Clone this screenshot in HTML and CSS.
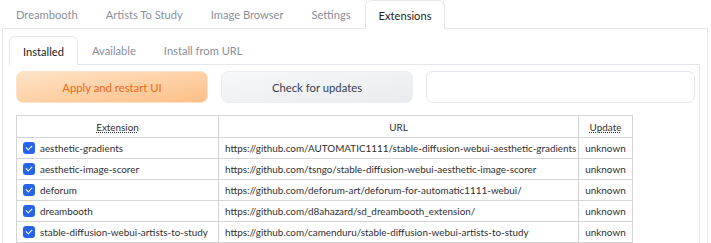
FILE: index.html
```html
<!DOCTYPE html>
<html lang="en">
<head>
    <meta charset="UTF-8">
    <title>Extensions</title>
    <link rel="stylesheet" href="styles.css">
</head>
<body>
    <div class="tabs">
        <div class="tab-nav">
            <button class="tab-btn">Dreambooth</button>
            <button class="tab-btn">Artists To Study</button>
            <button class="tab-btn">Image Browser</button>
            <button class="tab-btn">Settings</button>
            <button class="tab-btn selected">Extensions</button>
        </div>
        <div class="tabitem outer">
            <div class="tabs">
                <div class="tab-nav">
                    <button class="tab-btn selected">Installed</button>
                    <button class="tab-btn">Available</button>
                    <button class="tab-btn">Install from URL</button>
                </div>
                <div class="tabitem inner">
                    <div class="actions">
                        <button class="btn primary">Apply and restart UI</button>
                        <button class="btn secondary">Check for updates</button>
                        <input class="text-box" type="text">
                    </div>
                    <table class="ext-table">
                        <thead>
                            <tr>
                                <th class="col-name"><abbr>Extension</abbr></th>
                                <th class="col-url">URL</th>
                                <th class="col-update"><abbr>Update</abbr></th>
                            </tr>
                        </thead>
                        <tbody>
                            <tr>
                                <td><label><span class="check"></span>aesthetic-gradients</label></td>
                                <td>https://github.com/AUTOMATIC1111/stable-diffusion-webui-aesthetic-gradients</td>
                                <td class="status">unknown</td>
                            </tr>
                            <tr>
                                <td><label><span class="check"></span>aesthetic-image-scorer</label></td>
                                <td>https://github.com/tsngo/stable-diffusion-webui-aesthetic-image-scorer</td>
                                <td class="status">unknown</td>
                            </tr>
                            <tr>
                                <td><label><span class="check"></span>deforum</label></td>
                                <td>https://github.com/deforum-art/deforum-for-automatic1111-webui/</td>
                                <td class="status">unknown</td>
                            </tr>
                            <tr>
                                <td><label><span class="check"></span>dreambooth</label></td>
                                <td>https://github.com/d8ahazard/sd_dreambooth_extension/</td>
                                <td class="status">unknown</td>
                            </tr>
                            <tr>
                                <td><label><span class="check"></span>stable-diffusion-webui-artists-to-study</label></td>
                                <td>https://github.com/camenduru/stable-diffusion-webui-artists-to-study</td>
                                <td class="status">unknown</td>
                            </tr>
                        </tbody>
                    </table>
                </div>
            </div>
        </div>
    </div>
</body>
</html>
```

FILE: styles.css
```css
:root {
    --border: #e5e7eb;
    --cell-border: #d4d4d4;
    --text: #374151;
    --text-light: #8a8f98;
    --blue: #2563eb;
}

body {
    margin: 0;
    padding: 0 3px 0 2px;
    font-family: 'Lato', 'Liberation Sans', sans-serif;
    color: var(--text);
    background: #fff;
    overflow: hidden;
}

.tab-nav {
    display: flex;
    border-bottom: 1px solid var(--border);
}

.tab-btn {
    height: 28px;
    padding: 0 13px;
    border: 1px solid transparent;
    border-bottom: none;
    background: none;
    font-family: inherit;
    font-size: 11.15px;
    color: var(--text-light);
    margin-bottom: -1px;
    border-radius: 6px 6px 0 0;
}

.tab-btn.selected {
    height: 29px;
    color: #222;
    background: #fff;
    border-color: var(--border);
}

.tabitem.outer {
    border-left: 1px solid var(--border);
    border-right: 1px solid var(--border);
    padding: 7px 7px 0 6px;
    height: 300px;
}

.tabitem.inner {
    border-right: 1px solid var(--border);
    padding: 6px 4px 0 7px;
}

.actions {
    display: flex;
    gap: 13px;
    margin-bottom: 12px;
}

.btn {
    width: 192px;
    height: 32px;
    border-radius: 7px;
    font-family: inherit;
    font-size: 11.3px;
}

.btn.primary {
    color: #ea6a12;
    border: 1px solid #fde2c8;
    background: linear-gradient(to bottom right, #fee3c8, #fdbf86);
}

.btn.secondary {
    color: #374151;
    border: 1px solid #eceef1;
    background: linear-gradient(to bottom right, #f7f8f9, #e9ebee);
}

.text-box {
    flex: 1;
    height: 32px;
    box-sizing: border-box;
    border: 1px solid var(--border);
    border-radius: 7px;
    margin: 0;
}

.ext-table {
    width: 616px;
    border-collapse: collapse;
    table-layout: fixed;
    font-size: 9.9px;
    color: #2f2f2f;
}

.ext-table th,
.ext-table td {
    border: 1px solid var(--cell-border);
    height: 20px;
    padding: 0 6px;
    white-space: nowrap;
    overflow: hidden;
}

.ext-table th {
    font-weight: normal;
    height: 21px;
}

.ext-table abbr {
    text-decoration: underline dotted;
}

.col-name { width: 189px; }
.col-url { width: 347px; }
.col-update { width: 41px; }

.ext-table label {
    display: flex;
    align-items: center;
    gap: 5px;
}

.check {
    flex: none;
    width: 12px;
    height: 12px;
    border-radius: 3px;
    background: var(--blue);
    position: relative;
}

.check::after {
    content: '';
    position: absolute;
    left: 4px;
    top: 2px;
    width: 3px;
    height: 5px;
    border: solid #fff;
    border-width: 0 1.5px 1.5px 0;
    transform: rotate(45deg);
}

.status {
    text-align: center;
}
```
